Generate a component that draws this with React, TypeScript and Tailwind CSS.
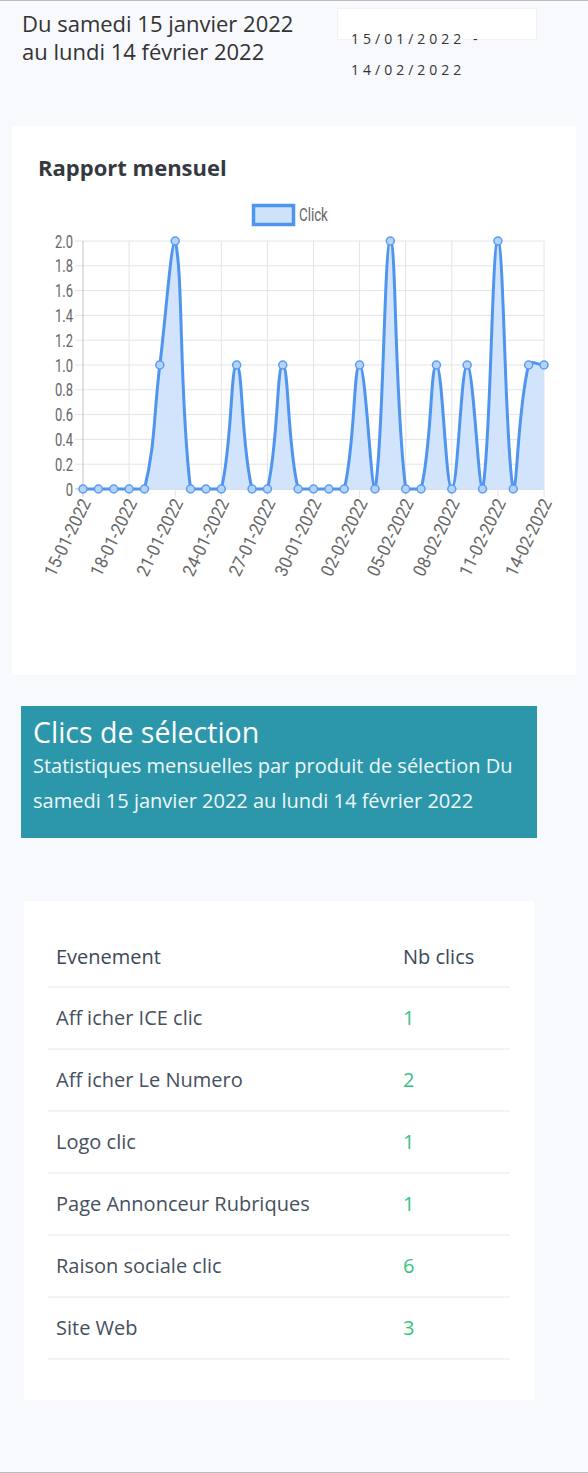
import React from 'react';

// clicks per day, 15-01-2022 .. 14-02-2022
const values = [0, 0, 0, 0, 0, 1, 2, 0, 0, 0, 1, 0, 0, 1, 0, 0, 0, 0, 1, 0, 2, 0, 0, 1, 0, 1, 0, 2, 0, 1, 1];

const days = values.map((_, i) => {
  const d = new Date(2022, 0, 15 + i);
  const dd = String(d.getDate()).padStart(2, '0');
  const mm = String(d.getMonth() + 1).padStart(2, '0');
  return `${dd}-${mm}-${d.getFullYear()}`;
});

const left = 83;
const right = 544;
const top = 241;
const bottom = 489;
const stepX = (right - left) / (values.length - 1);
const px = (i: number) => left + i * stepX;
const py = (v: number) => bottom - (v / 2) * (bottom - top);

const rows = [
  { label: 'Afficher ICE clic', value: 1, split: true },
  { label: 'Afficher Le Numero', value: 2, split: true },
  { label: 'Logo clic', value: 1 },
  { label: 'Page Annonceur Rubriques', value: 1 },
  { label: 'Raison sociale clic', value: 6 },
  { label: 'Site Web', value: 3 },
];

type Pt = { x: number; y: number };

// same smoothing as chart.js (tension 0.4, control points kept inside the area)
function curvePath(pts: Pt[]) {
  const t = 0.4;
  const clamp = (p: Pt) => ({
    x: Math.min(Math.max(p.x, left), right),
    y: Math.min(Math.max(p.y, top), bottom),
  });
  const ctrl = pts.map((cur, i) => {
    const prev = pts[i - 1] || cur;
    const next = pts[i + 1] || cur;
    const d01 = Math.hypot(cur.x - prev.x, cur.y - prev.y);
    const d12 = Math.hypot(next.x - cur.x, next.y - cur.y);
    const s01 = d01 + d12 ? d01 / (d01 + d12) : 0;
    const s12 = d01 + d12 ? d12 / (d01 + d12) : 0;
    return {
      before: clamp({ x: cur.x - t * s01 * (next.x - prev.x), y: cur.y - t * s01 * (next.y - prev.y) }),
      after: clamp({ x: cur.x + t * s12 * (next.x - prev.x), y: cur.y + t * s12 * (next.y - prev.y) }),
    };
  });
  let d = `M${pts[0].x},${pts[0].y}`;
  for (let i = 1; i < pts.length; i++) {
    const a = ctrl[i - 1].after;
    const b = ctrl[i].before;
    d += ` C${a.x},${a.y} ${b.x},${b.y} ${pts[i].x},${pts[i].y}`;
  }
  return d;
}

const ClickChart: React.FC = () => {
  const pts = values.map((v, i) => ({ x: px(i), y: py(v) }));
  const line = curvePath(pts);
  const area = `${line} L${right},${bottom} L${left},${bottom} Z`;
  const yTicks = [0, 0.2, 0.4, 0.6, 0.8, 1, 1.2, 1.4, 1.6, 1.8, 2];

  return (
    <svg width="564" height="480" viewBox="12 195 564 480" className="block" style={{ fontFamily: 'Roboto, "Liberation Sans", sans-serif' }}>
      {/* legend */}
      <rect x="253.5" y="205.5" width="40" height="19" fill="#cde2fb" stroke="#4f95ef" strokeWidth="3.5" />
      <g transform="translate(299,221) scale(0.74,1)">
        <text x="0" y="0" fontSize="18" fill="#666">Click</text>
      </g>

      {/* grid */}
      {yTicks.map((v) => (
        <line key={v} x1={left - 8} x2={right} y1={py(v)} y2={py(v)} stroke={v === 0 ? '#bdbdbd' : '#e4e4e4'} strokeWidth="1" />
      ))}
      {values.map((_, i) =>
        i % 3 === 0 ? (
          <line key={i} x1={px(i)} x2={px(i)} y1={top} y2={bottom + 8} stroke={i === 0 ? '#c4c4c4' : '#e4e4e4'} strokeWidth="1" />
        ) : null
      )}

      {/* y labels */}
      {yTicks.map((v) => (
        <g key={v} transform={`translate(73,${py(v) + 6.5}) scale(0.72,1)`}>
          <text x="0" y="0" fontSize="18" fill="#666" textAnchor="end">
            {v === 0 ? '0' : v.toFixed(1)}
          </text>
        </g>
      ))}

      {/* x labels */}
      {days.map((d, i) =>
        i % 3 === 0 ? (
          <g key={d} transform={`translate(${px(i) + 3},${bottom + 11}) rotate(-64) scale(0.92,1)`}>
            <text x="0" y="6" fontSize="18" fill="#666" textAnchor="end">
              {d}
            </text>
          </g>
        ) : null
      )}

      {/* data */}
      <path d={area} fill="#cfe3fc" fillOpacity="0.95" />
      <path d={line} fill="none" stroke="#4f95ef" strokeWidth="3" />
      {pts.map((p, i) => (
        <circle key={i} cx={p.x} cy={p.y} r="4" fill="#b3d3fa" stroke="#5a9cf0" strokeWidth="1.5" />
      ))}
    </svg>
  );
};

export default function App() {
  return (
    <div className="min-h-[1473px] bg-[#f7f9fd] border-t border-b border-[#bcbcbc] text-[#333]" style={{ fontFamily: '"Open Sans", sans-serif' }}>
      {/* Header */}
      <div className="flex items-start pt-[7px]">
        <div className="w-[337px] pl-[22px] pt-[1px] text-[22px] leading-[28px] text-[#333]">
          <span className="block">Du samedi 15 janvier 2022</span>
          <span className="block">au lundi 14 février 2022</span>
        </div>
        <div className="w-[200px] h-8 bg-white border border-[#f0f2f6] pl-[13px] pt-[14px] text-[14px] leading-[31px] tracking-[4px] text-[#333]">
          15/01/2022 - 14/02/2022
        </div>
      </div>

      {/* Monthly chart */}
      <div className="mx-3 mt-[61px] bg-white">
        <h2 className="pl-[26px] pt-[27px] pb-[14px] text-[22px] leading-[28px] font-bold text-[#343a40]">
          Rapport mensuel
        </h2>
        <ClickChart />
      </div>

      {/* Selection banner */}
      <div className="ml-[21px] w-[516px] mt-[31px] bg-[#2c97ab] px-3 pt-[10px] pb-5 text-white">
        <h3 className="text-[28.5px] leading-[32px]">Clics de sélection</h3>
        <p className="text-[20px] leading-[35px] text-[#eef7f9]">
          Statistiques mensuelles par produit de sélection Du samedi 15 janvier 2022 au lundi 14 février 2022
        </p>
      </div>

      {/* Table */}
      <div className="ml-6 w-[510px] mt-[63px] bg-white px-6 pt-[26px] pb-[40px]">
        <div className="grid grid-cols-[355px_1fr] h-[61px] items-center border-b-2 border-[#f1f3f6] text-[20px] text-[#3c4858]">
          <span className="pl-2">Evenement</span>
          <span>Nb clics</span>
        </div>
        {rows.map((r) => (
          <div key={r.label} className="grid grid-cols-[355px_1fr] h-[62px] items-center border-b-2 border-[#f1f3f6] text-[20px]">
            <span className="pl-2 text-[#46505e]">
              {r.split ? (
                <>
                  Aff<span className="ml-[5px]">{r.label.slice(3)}</span>
                </>
              ) : (
                r.label
              )}
            </span>
            <span className="text-[#35c47f]">{r.value}</span>
          </div>
        ))}
      </div>
    </div>
  );
}
